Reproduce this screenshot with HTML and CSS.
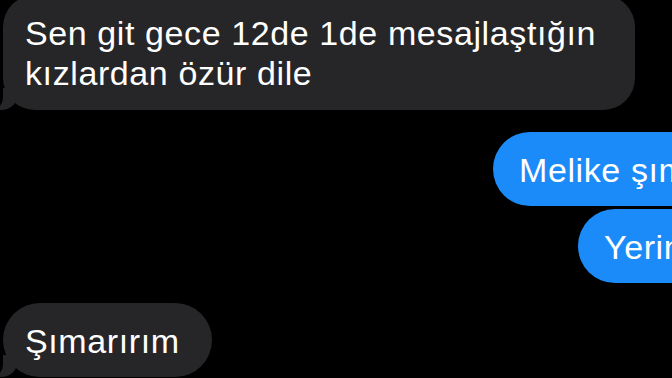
FILE: index.html
```html
<!DOCTYPE html>
<html lang="tr">

<head>
    <meta charset="UTF-8">
    <meta name="viewport" content="width=device-width, initial-scale=1.0">
    <title>Mesajlar</title>
    <link rel="stylesheet" href="styles.css">
</head>

<body>
    <div class="chat">
        <div class="bubble received first">Sen git gece 12de 1de mesajlaştığın<br>kızlardan özür dile</div>

        <div class="bubble sent one">Melike şımarma</div>
        <div class="bubble sent two">Yerinde dur</div>

        <div class="bubble received last">Şımarırım</div>
    </div>
</body>

</html>
```

FILE: styles.css
```css
body {
    margin: 0;
    height: 378px;
    background-color: #000;
    overflow: hidden;
    font-family: 'Liberation Sans', Arial, sans-serif;
}

.chat {
    display: flex;
    flex-direction: column;
    align-items: flex-start;
}

.bubble {
    position: relative;
    box-sizing: border-box;
    height: 74px;
    padding: 18px 28px 16px 22px;
    font-size: 34px;
    line-height: 40px;
    letter-spacing: 0.6px;
    color: #fff;
    border-radius: 37px;
    white-space: nowrap;
}

.received {
    background-color: #262628;
    margin-left: 3px;
}

.received::before {
    content: "";
    position: absolute;
    bottom: 0;
    left: -8px;
    width: 22px;
    height: 22px;
    background-color: #262628;
    border-bottom-right-radius: 16px 14px;
}

.received::after {
    content: "";
    position: absolute;
    bottom: 0;
    left: -26px;
    width: 26px;
    height: 22px;
    background-color: #000;
    border-bottom-right-radius: 12px;
}

.first {
    height: 115px;
    margin-top: -5px;
    width: 632px;
    border-radius: 32px;
}

.sent {
    background-color: #1b8bfa;
    padding-left: 26px;
}

.one {
    margin-top: 22px;
    margin-left: 493px;
}

.two {
    margin-top: 3px;
    margin-left: 578px;
}

.last {
    margin-top: 20px;
    width: 209px;
}
```
